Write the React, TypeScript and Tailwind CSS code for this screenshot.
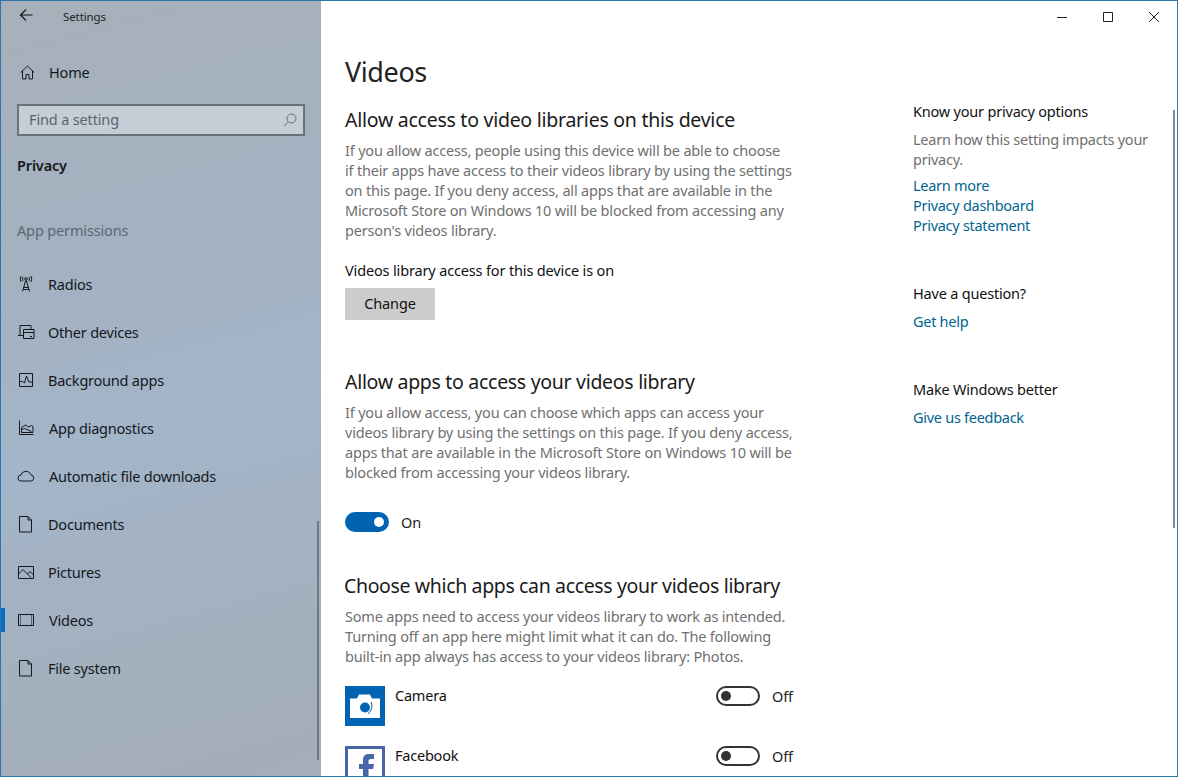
import React from "react";

const S = ({ children }: { children: React.ReactNode }) => (
  <svg width="18" height="18" viewBox="0 0 18 18" fill="none" stroke="#15191e" strokeWidth="1" className="block shrink-0">
    {children}
  </svg>
);

const nav: { label: string; icon: React.ReactNode; x?: boolean }[] = [
  {
    label: "Radios",
    icon: (
      <S>
        <path d="M5.500 16.500 8.500 6h1l3 10.500M7 12.500h4M6.200 14.500h5.600" />
        <circle cx="9" cy="4" r="1.300" />
        <path d="M6 2q-1 2 0 4M12 2q1 2 0 4M4 1Q2.500 4 4 7M14 1q1.500 3 0 6" />
      </S>
    ),
  },
  {
    label: "Other devices",
    icon: (
      <S>
        <path d="M1 12.500h5M3 12.500V2.500h11v4" />
        <path d="M6.500 6.500h10.500v9H6.500zM6.500 9.500h10.500M13 13.500h2" />
      </S>
    ),
  },
  {
    label: "Background apps",
    icon: (
      <S>
        <path d="M2.500 2.500h13v13h-13z" />
        <path d="M2.500 10.500h3l2 1.500 2-7 2.500 6h3.500" />
      </S>
    ),
  },
  {
    label: "App diagnostics",
    icon: (
      <S>
        <path d="M2.500 1.500v14h14" />
        <path d="M4.500 13.500v-5l4-2.500 3 2 3-1.500 1.500 1v6zM4.500 10.500l3-1 7 3" />
      </S>
    ),
  },
  {
    label: "Automatic file downloads",
    icon: (
      <S>
        <path d="M4 14h9.500a3 3 0 0 0 .5-6A5 5 0 0 0 8 4.500 4.500 4.500 0 0 0 4 8 3 3 0 0 0 4 14z" />
      </S>
    ),
  },
  {
    label: "Documents",
    icon: (
      <S>
        <path d="M2.500 1.500h8.500l3.500 3.500v12h-12zM11 1.500V5h3.500" />
      </S>
    ),
  },
  {
    label: "Pictures",
    icon: (
      <S>
        <path d="M1.500 3.500h15v12h-15z" />
        <path d="M1.500 11 6 6.500 14 14.500M10.500 11 13 8.500l3.500 3.500" />
      </S>
    ),
  },
  {
    label: "Videos",
    x: true,
    icon: (
      <S>
        <path d="M1.500 3.500h15v11h-15z" />
        <path d="M3.500 3.500v11M14.500 3.500v11" strokeDasharray="1 1" />
      </S>
    ),
  },
  {
    label: "File system",
    icon: (
      <S>
        <path d="M2.500 1.500h8.500l3.500 3.500v12h-12zM11 1.500V5h3.500" />
      </S>
    ),
  },
];

const H2 = ({ children, cls = "" }: { children: React.ReactNode; cls?: string }) => (
  <h2 className={`text-[19.500px] leading-[28px] text-[#1a1a1a] ${cls}`}>{children}</h2>
);

const P = ({ children, cls = "tracking-[-0.18px]" }: { children: React.ReactNode; cls?: string }) => (
  <p className={`text-[14.500px] leading-[20px] text-[#707070] whitespace-nowrap ${cls}`}>{children}</p>
);

const Link = ({ children }: { children: React.ReactNode }) => (
  <div className="text-[14.500px] leading-[20px] tracking-[-0.28px] text-[#00658f]">{children}</div>
);

const Off = () => (
  <div className="flex items-center gap-3 ml-auto">
    <div className="w-11 h-5 rounded-full border-2 border-[#333] flex items-center px-[3px]">
      <div className="w-[10px] h-[10px] rounded-full bg-[#333]" />
    </div>
    <span className="text-[14.500px] leading-5 tracking-[-0.12px] text-[#222]">Off</span>
  </div>
);

export default function App() {
  return (
    <div
      className="w-[1178px] h-[777px] overflow-hidden flex border border-[#2f76a8] bg-white"
      style={{ fontFamily: '"Noto Sans", sans-serif' }}
    >
      <aside className="w-[320px] shrink-0 h-full relative bg-[linear-gradient(165deg,#a7b0ba_0%,#a3b1c0_30%,#a3b5c9_55%,#a3b0be_80%,#a4adb8_100%)]">
        <div className="flex items-center h-[30px] pl-[18px]">
          <svg width="14" height="14" viewBox="0 0 14 14" fill="none" stroke="#111" strokeWidth="1.100" className="block -mt-[2px]">
            <path d="M13.500 7H1.500M7 1.500 1.500 7 7 12.500" />
          </svg>
          <span className="ml-[30px] text-[11.500px] tracking-[-0.1px] text-[#222] pt-[2px]">Settings</span>
        </div>
        <div className="flex items-center h-12 mt-[17px] pl-[19px]">
          <svg width="15" height="15" viewBox="0 0 15 15" fill="none" stroke="#15191e" strokeWidth="1" className="block">
            <path d="M.8 7.500 7.500 1l6.700 6.500M2.500 6v8h3.500V9.500h3V14h3.500V6" />
          </svg>
          <span className="ml-[14px] pt-[2px] text-[14.500px] tracking-[-0.15px] text-[#14181d]">Home</span>
        </div>
        <div className="ml-4 mt-2 w-[288px] h-8 border-2 border-[#69737d] bg-[#c5cdd6] flex items-center pl-[10px] pr-[6px]">
          <span className="text-[14.500px] tracking-[-0.15px] text-[#5b646d]">Find a setting</span>
          <svg width="14" height="14" viewBox="0 0 14 14" fill="none" stroke="#656e77" strokeWidth="1" className="block ml-auto">
            <circle cx="8.500" cy="5.500" r="4.500" />
            <path d="M5.300 8.700 1 13" />
          </svg>
        </div>
        <div className="ml-4 mt-[19px] text-[14.500px] leading-5 font-semibold tracking-[-0.15px] text-[#14181d]">Privacy</div>
        <div className="ml-4 mt-[45px] text-[14.500px] leading-5 tracking-[-0.15px] text-[#5c6873]">App permissions</div>
        <div className="mt-[20px]">
          {nav.map((n) => (
            <div key={n.label} className="relative flex items-center h-12 pl-4">
              {n.x && <div className="absolute left-0 top-3 w-1 h-6 bg-[#0a6cc4]" />}
              {n.icon}
              <span className={`${n.x || n.label.startsWith("App") || n.label.startsWith("Auto") ? "ml-[14px]" : "ml-[13px]"} pt-[2px] text-[14.500px] tracking-[-0.22px] text-[#14181d]`}>
                {n.label}
              </span>
            </div>
          ))}
        </div>
        <div className="absolute right-[2px] top-[520px] bottom-[16px] w-[2px] bg-[#6f7780]" />
      </aside>

      <main className="flex-1 relative flex flex-col min-w-0">
        <div className="flex h-[32px] justify-end pr-[18px] gap-[36px] items-center">
          <svg width="10" height="10" viewBox="0 0 10 10" stroke="#222" className="block"><path d="M0 5.500h10" /></svg>
          <svg width="10" height="10" viewBox="0 0 10 10" stroke="#222" fill="none" className="block"><path d="M.5.500h9v9h-9z" /></svg>
          <svg width="10" height="10" viewBox="0 0 10 10" stroke="#222" fill="none" className="block"><path d="M0 0l10 10M10 0 0 10" /></svg>
        </div>
        <div className="flex flex-1 min-h-0">
          <div className="w-[592px] pl-6 shrink-0">
            <h1 className="mt-[19px] text-[27px] leading-10 tracking-[-0.4px] text-[#222]">Videos</h1>
            <H2 cls="mt-[14px] tracking-[-0.26px]">Allow access to video libraries on this device</H2>
            <P cls="mt-[6px] tracking-[-0.18px]">
              If you allow access, people using this device will be able to choose<br />
              if their apps have access to their videos library by using the settings<br />
              on this page. If you deny access, all apps that are available in the<br />
              Microsoft Store on Windows 10 will be blocked from accessing any<br />
              person's videos library.
            </P>
            <div className="mt-5 text-[14.500px] leading-5 tracking-[-0.15px] text-[#111]">Videos library access for this device is on</div>
            <div className="mt-2 w-[90px] h-8 bg-[#cccccc] flex items-center justify-center text-[14.500px] tracking-[-0.1px] text-[#111]">Change</div>
            <H2 cls="mt-[48px] tracking-[-0.3px]">Allow apps to access your videos library</H2>
            <P cls="mt-[6px] tracking-[-0.18px]">
              If you allow access, you can choose which apps can access your<br />
              videos library by using the settings on this page. If you deny access,<br />
              apps that are available in the Microsoft Store on Windows 10 will be<br />
              blocked from accessing your videos library.
            </P>
            <div className="mt-[30px] flex items-center gap-3 h-5">
              <div className="w-11 h-5 rounded-full bg-[#0063b1] flex items-center justify-end px-[5px]">
                <div className="w-[10px] h-[10px] rounded-full bg-white" />
              </div>
              <span className="text-[14.500px] pt-[1px] tracking-[-0.15px] text-[#222]">On</span>
            </div>
            <H2 cls="mt-[40px] -ml-px tracking-[-0.36px]">Choose which apps can access your videos library</H2>
            <P cls="mt-[6px] tracking-[-0.18px]">
              Some apps need to access your videos library to work as intended.<br />
              Turning off an app here might limit what it can do. The following<br />
              built-in app always has access to your videos library: Photos.
            </P>
            <div className="mt-5 w-[448px]">
              <div className="flex h-[60px] items-start">
                <div className="w-10 h-10 bg-[#0063b1] flex items-center justify-center shrink-0">
                  <svg width="30" height="24" viewBox="0 0 30 24" className="block">
                    <path d="M0 4.500h7L9 .5h11l2 4h8V24H0z" fill="#fff" />
                    <circle cx="15" cy="13.500" r="5" fill="#0063b1" />
                    <path d="M21 8q3 6-3 12" fill="none" stroke="#0063b1" />
                  </svg>
                </div>
                <span className="ml-[10px] text-[14.500px] leading-[18px] tracking-[-0.22px] text-[#111]">Camera</span>
                <Off />
              </div>
              <div className="flex h-[60px] items-start">
                <div className="w-10 h-10 bg-[#4866a8] shrink-0 p-[3px]">
                  <div className="w-full h-full bg-white flex items-start justify-center pt-[5px] pl-[3px]">
                    <svg width="16" height="36" viewBox="0 0 16 36" className="block">
                      <path d="M4 36V15H0v-5h4V6c0-4 2-6 6-6h5v5h-3c-2 0-2.500 1-2.500 2.500V10H15l-.8 5H9.500v21z" fill="#4866a8" />
                    </svg>
                  </div>
                </div>
                <span className="ml-[10px] text-[14.500px] leading-[18px] tracking-[-0.22px] text-[#111]">Facebook</span>
                <Off />
              </div>
            </div>
          </div>
          <div className="flex-1 pt-[68px]">
            <div className="text-[14.500px] leading-5 tracking-[-0.2px] text-[#111]">Know your privacy options</div>
            <P cls="mt-2 tracking-[-0.24px]">Learn how this setting impacts your<br />privacy.</P>
            <div className="mt-[6px]">
              <Link>Learn more</Link>
              <Link>Privacy dashboard</Link>
              <Link>Privacy statement</Link>
            </div>
            <div className="mt-[48px] text-[14.500px] leading-5 tracking-[-0.2px] text-[#111]">Have a question?</div>
            <div className="mt-2"><Link>Get help</Link></div>
            <div className="mt-[48px] text-[14.500px] leading-5 tracking-[-0.2px] text-[#111]">Make Windows better</div>
            <div className="mt-2"><Link>Give us feedback</Link></div>
          </div>
        </div>
        <div className="absolute right-[2px] top-[109px] w-[2px] h-[418px] bg-[#8a8a8a]" />
      </main>
    </div>
  );
}
